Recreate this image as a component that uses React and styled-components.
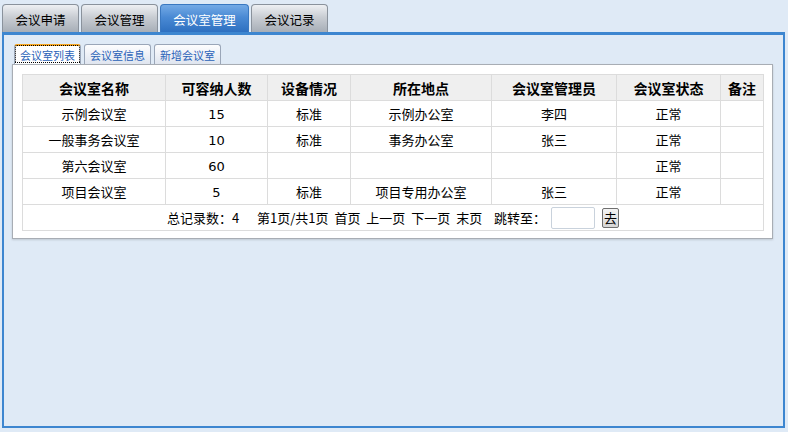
import React from 'react';
import styled, { createGlobalStyle } from 'styled-components';

const GlobalStyle = createGlobalStyle`
  html, body {
    margin: 0;
    padding: 0;
    background: #dfeaf6;
    font-family: "Noto Sans CJK SC", "DejaVu Sans", sans-serif;
    font-size: 13px;
    color: #000;
  }
`;

const mainTabs = ['会议申请', '会议管理', '会议室管理', '会议记录'];
const subTabs = ['会议室列表', '会议室信息', '新增会议室'];
const columns = [
  { title: '会议室名称', width: 143 },
  { title: '可容纳人数', width: 102 },
  { title: '设备情况', width: 83 },
  { title: '所在地点', width: 141 },
  { title: '会议室管理员', width: 125 },
  { title: '会议室状态', width: 104 },
  { title: '备注', width: 43 },
];
const rows = [
  ['示例会议室', '15', '标准', '示例办公室', '李四', '正常', ''],
  ['一般事务会议室', '10', '标准', '事务办公室', '张三', '正常', ''],
  ['第六会议室', '60', '', '', '', '正常', ''],
  ['项目会议室', '5', '标准', '项目专用办公室', '张三', '正常', ''],
];

export default function App() {
  return (
    <>
      <GlobalStyle />
      <Page>
        <TabBar>
          {mainTabs.map((t, i) => (
            <MainTab key={t} $active={i === 2} $wide={i === 2}>
              {t}
            </MainTab>
          ))}
        </TabBar>
        <Panel>
          <SubTabBar>
            {subTabs.map((t, i) => (
              <SubTab key={t} $active={i === 0}>
                {t}
              </SubTab>
            ))}
          </SubTabBar>
          <ListBox>
            <Table>
              <colgroup>
                {columns.map(c => (
                  <col key={c.title} style={{ width: c.width }} />
                ))}
              </colgroup>
              <thead>
                <tr>
                  {columns.map(c => (
                    <Th key={c.title}>{c.title}</Th>
                  ))}
                </tr>
              </thead>
              <tbody>
                {rows.map(r => (
                  <tr key={r[0]}>
                    {r.map((v, j) => (
                      <Td key={j} $num={j === 1}>
                        {v}
                      </Td>
                    ))}
                  </tr>
                ))}
                <tr>
                  <Pager colSpan={7}>
                    <PagerInner>
                      <PagerText>总记录数：4&nbsp;&nbsp; 第1页/共1页 首页 上一页 下一页 末页&nbsp; 跳转至：</PagerText>
                      <JumpInput />
                      <GoButton>去</GoButton>
                    </PagerInner>
                  </Pager>
                </tr>
              </tbody>
            </Table>
          </ListBox>
        </Panel>
      </Page>
    </>
  );
}

const Page = styled.div`
  padding: 4px 3px 0 2px;
  height: 428px;
  box-sizing: border-box;
  display: flex;
  flex-direction: column;
`;

const TabBar = styled.div`
  display: flex;
  gap: 2px;
  height: 28px;
`;

const MainTab = styled.div`
  width: ${p => (p.$wide ? 89 : 77)}px;
  box-sizing: border-box;
  border: 1px solid ${p => (p.$active ? '#3a78c0' : '#8a929c')};
  border-bottom: none;
  border-radius: 4px 4px 0 0;
  background: ${p =>
    p.$active
      ? 'linear-gradient(#74aae6 0%, #4a8ad4 45%, #2e70c0 100%)'
      : 'linear-gradient(#eef0f3 0%, #c9cdd3 45%, #a7aeb7 100%)'};
  color: ${p => (p.$active ? '#fff' : '#000')};
  font-size: 12.5px;
  display: flex;
  align-items: center;
  justify-content: center;
  padding-top: 1px;
`;

const Panel = styled.div`
  flex: 1;
  border: 2px solid #3d86d0;
  border-top-width: 3px;
  background: #dfeaf6;
  padding: 9px 8px 0 8px;
`;

const SubTabBar = styled.div`
  display: flex;
  gap: 3px;
  padding-left: 2px;
  height: 20px;
`;

const SubTab = styled.div`
  box-sizing: border-box;
  width: 67px;
  border: 1px solid #9aa6b8;
  border-top: ${p => (p.$active ? '2px solid #f5a623' : '1px solid #9aa6b8')};
  border-bottom: none;
  border-radius: 3px 3px 0 0;
  background: ${p => (p.$active ? '#fff' : 'linear-gradient(#fdfdfe, #dfe5ef)')};
  color: #2a62b8;
  font-size: 11px;
  display: flex;
  align-items: center;
  justify-content: center;
  outline: ${p => (p.$active ? '1px dotted #000' : 'none')};
  outline-offset: -2px;
`;

const ListBox = styled.div`
  background: #fff;
  border: 1px solid #a8adb4;
  box-shadow: 0 1px 2px rgba(0, 0, 0, 0.15);
  padding: 9px 9px 7px 9px;
  width: 761px;
  box-sizing: border-box;
`;

const Table = styled.table`
  width: 741px;
  border-collapse: collapse;
  table-layout: fixed;
  border: 1px solid #c4c4c4;
`;

const Th = styled.th`
  height: 26px;
  box-sizing: border-box;
  line-height: 16px;
  background: #efefef;
  border: 1px solid #dcdcdc;
  font-weight: bold;
  font-size: 14px;
  padding: 0;
  text-align: center;
`;

const Td = styled.td`
  height: 26px;
  line-height: 16px;
  border: 1px solid #dcdcdc;
  padding: ${p => (p.$num ? '3px 0 0 0' : '0')};
  box-sizing: border-box;
  text-align: center;
  font-size: 13px;
  font-family: ${p => (p.$num ? '"DejaVu Sans", sans-serif' : 'inherit')};
`;

const Pager = styled.td`
  height: 26px;
  box-sizing: border-box;
  line-height: 16px;
  border: 1px solid #dcdcdc;
  padding: 0;
`;

const PagerInner = styled.div`
  display: flex;
  align-items: center;
  justify-content: flex-start;
  padding-left: 144px;
  gap: 5px;
  font-size: 13px;
`;

const PagerText = styled.span`
  word-spacing: 3px;
  white-space: pre;
`;

const JumpInput = styled.div`
  width: 42px;
  height: 20px;
  border: 1px solid #c9d2dc;
  border-radius: 2px;
  background: #fff;
`;

const GoButton = styled.div`
  width: 15px;
  height: 18px;
  margin-left: 2px;
  border: 1px solid #6f6f6f;
  border-radius: 2px;
  background: linear-gradient(#f4f4f4, #d6d6d6);
  font-size: 13px;
  line-height: 18px;
  display: flex;
  align-items: center;
  justify-content: center;
`;
